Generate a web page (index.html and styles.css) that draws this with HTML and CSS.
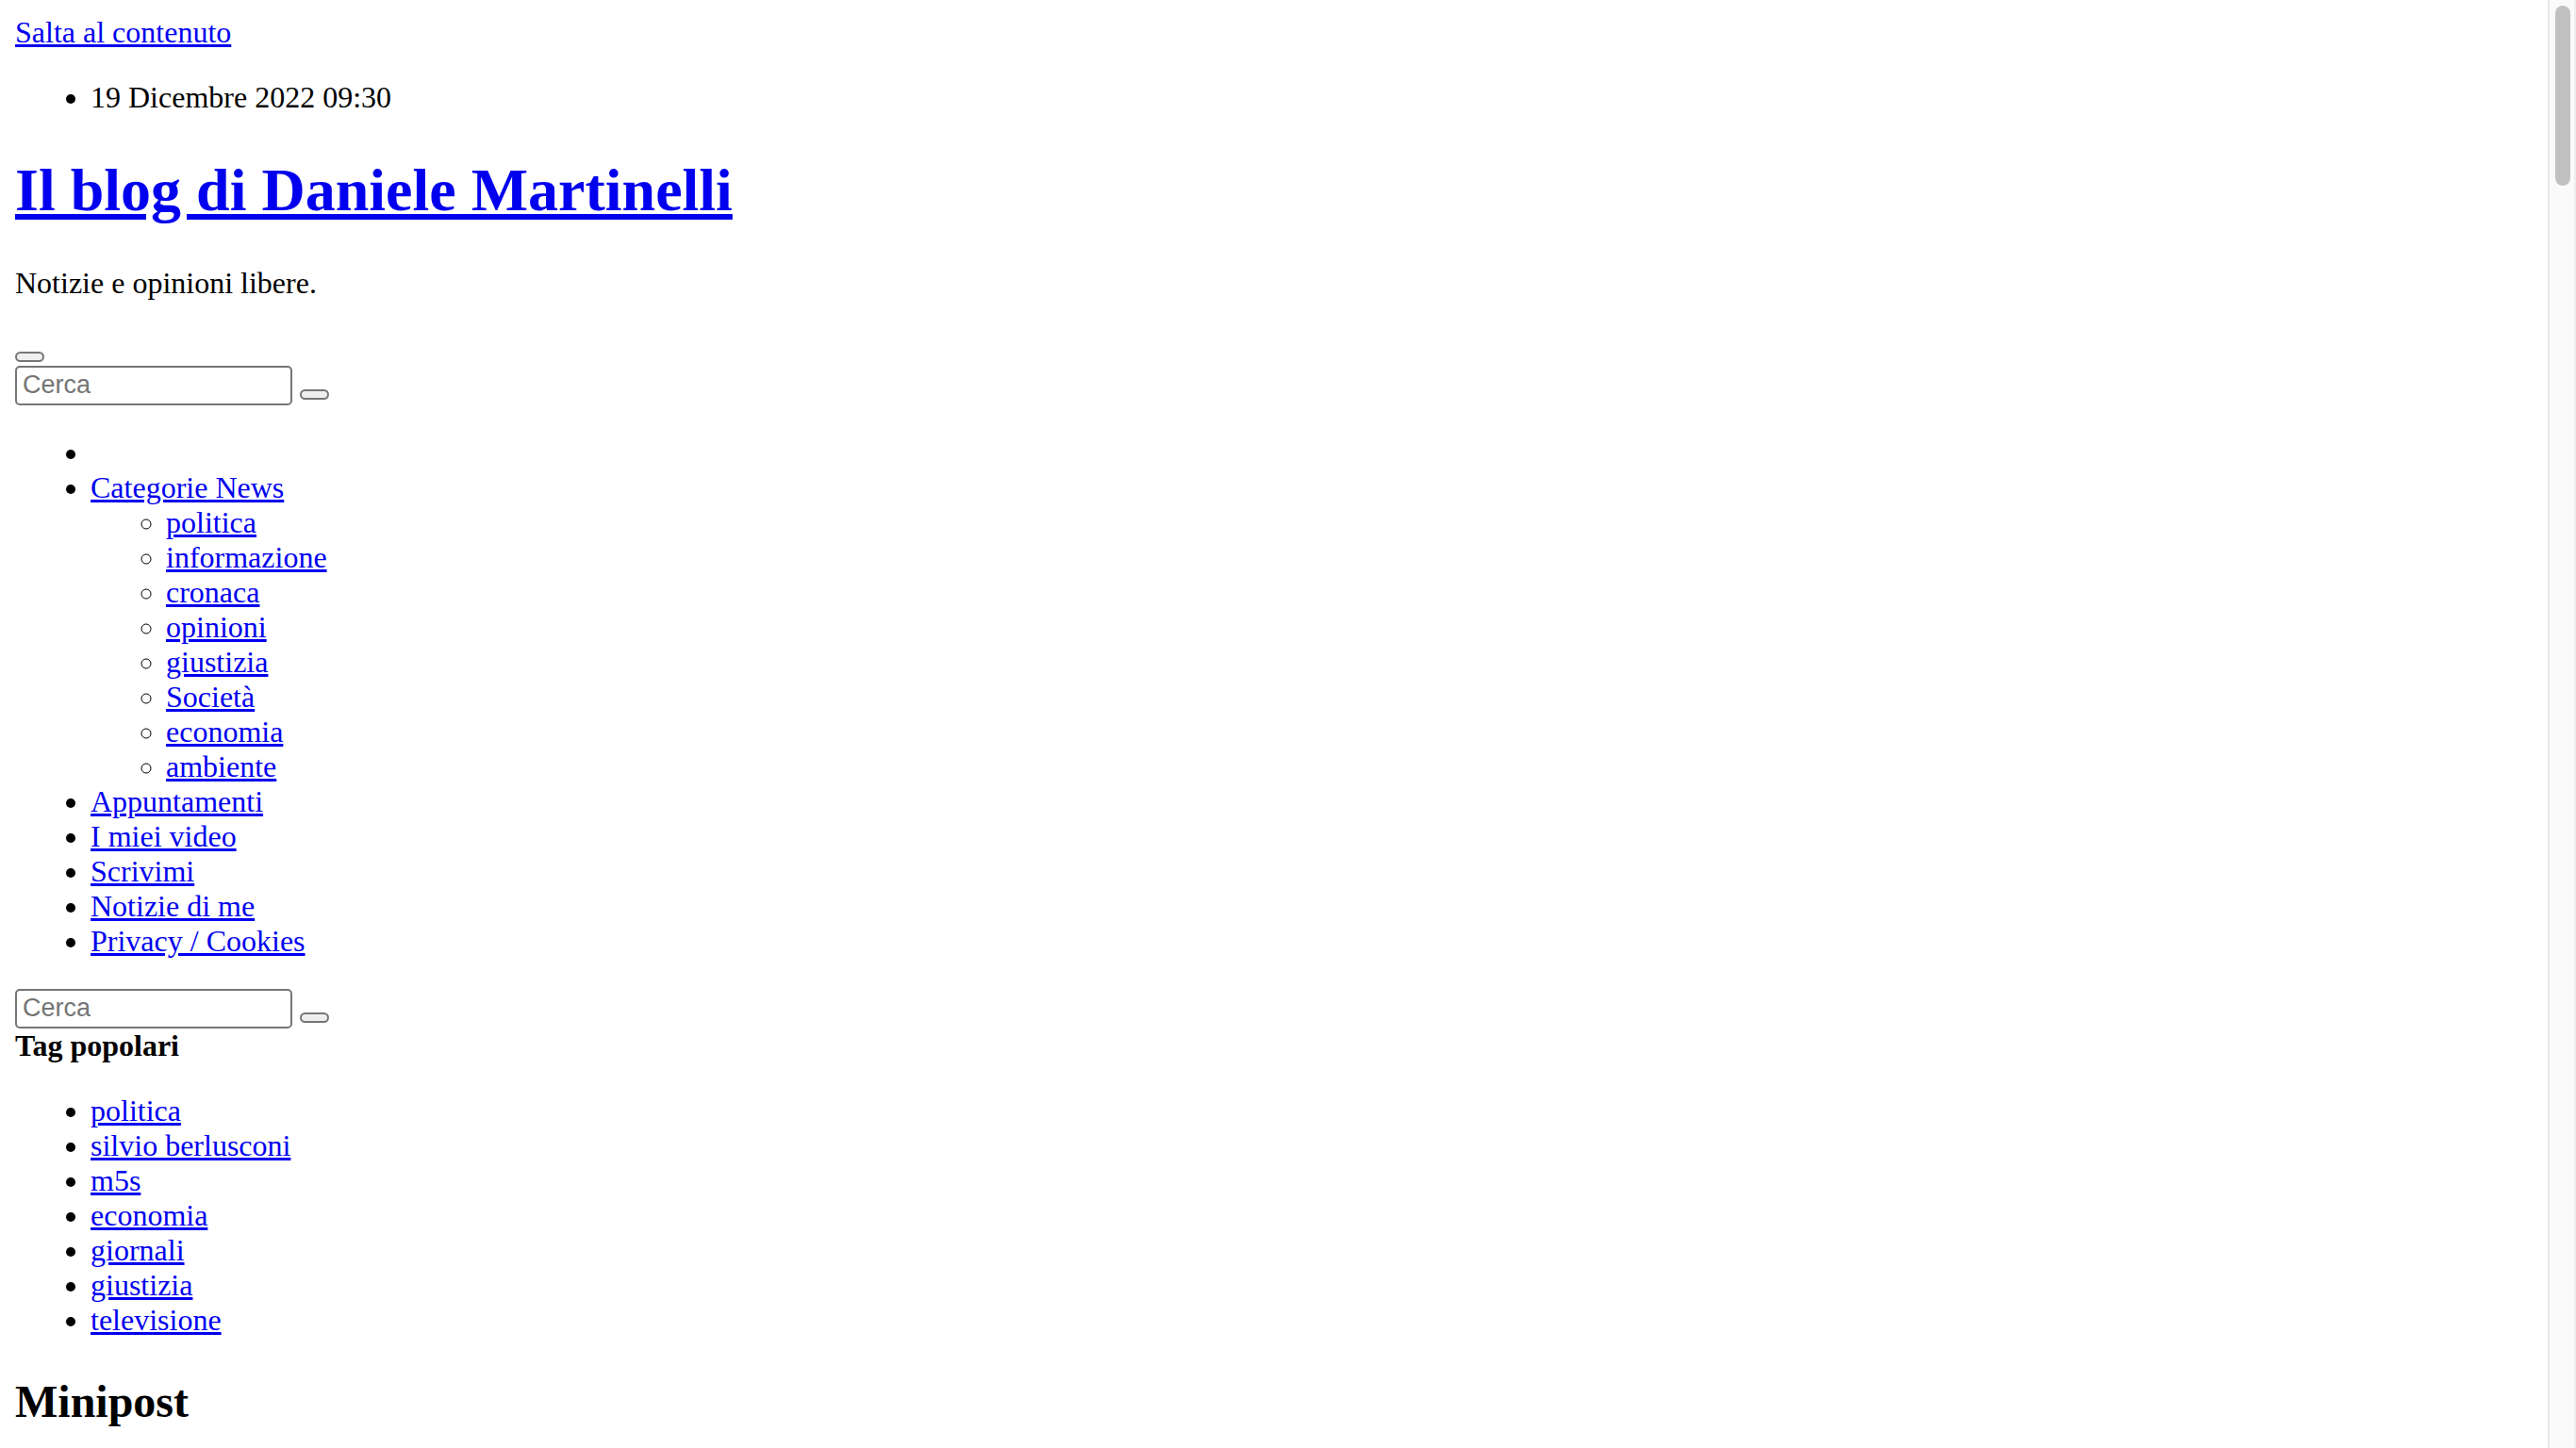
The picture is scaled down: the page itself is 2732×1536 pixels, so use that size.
FILE: index.html
```html
<!DOCTYPE html>
<html lang="it">
<head>
<meta charset="utf-8">
<title>Il blog di Daniele Martinelli</title>
<link rel="stylesheet" href="styles.css">
</head>
<body>
<a class="skip-link" href="#content">Salta al contenuto</a>
<ul class="dateline">
  <li>19 Dicembre 2022 09:30</li>
</ul>
<h1 class="site-title"><a href="#">Il blog di Daniele Martinelli</a></h1>
<p class="tagline">Notizie e opinioni libere.</p>
<div class="header-tools">
  <button class="btn btn-menu" type="button" aria-label="Menu"></button>
  <form class="search"><input class="search-field" type="text" placeholder="Cerca"> <button class="btn btn-search" type="submit" aria-label="Cerca"></button></form>
</div>
<ul class="menu">
  <li></li>
  <li><a href="#">Categorie News</a>
    <ul class="submenu">
      <li><a href="#">politica</a></li>
      <li><a href="#">informazione</a></li>
      <li><a href="#">cronaca</a></li>
      <li><a href="#">opinioni</a></li>
      <li><a href="#">giustizia</a></li>
      <li><a href="#">Società</a></li>
      <li><a href="#">economia</a></li>
      <li><a href="#">ambiente</a></li>
    </ul>
  </li>
  <li><a href="#">Appuntamenti</a></li>
  <li><a href="#">I miei video</a></li>
  <li><a href="#">Scrivimi</a></li>
  <li><a href="#">Notizie di me</a></li>
  <li><a href="#">Privacy / Cookies</a></li>
</ul>
<form class="search"><input class="search-field" type="text" placeholder="Cerca"> <button class="btn btn-search" type="submit" aria-label="Cerca"></button></form>
<div class="widget-title">Tag popolari</div>
<ul class="tags">
  <li><a href="#">politica</a></li>
  <li><a href="#">silvio berlusconi</a></li>
  <li><a href="#">m5s</a></li>
  <li><a href="#">economia</a></li>
  <li><a href="#">giornali</a></li>
  <li><a href="#">giustizia</a></li>
  <li><a href="#">televisione</a></li>
</ul>
<h2 class="section-title" id="content">Minipost</h2>
<aside class="scrollbar" aria-hidden="true"><span class="scrollbar-thumb"></span></aside>
</body>
</html>
```

FILE: styles.css
```css
html {
  background: #ffffff;
}

body {
  margin: 16px;
  font-family: "Liberation Serif", "Times New Roman", serif;
  font-size: 32px;
  line-height: 37px;
  color: #000000;
}

a {
  color: #0000ee;
  text-decoration: underline;
}

ul {
  margin: 32px 0;
  padding-left: 80px;
}

.submenu {
  margin: 0;
  list-style-type: circle;
}

.site-title {
  font-size: 64px;
  line-height: 74px;
  font-weight: bold;
  margin: 42.88px 0;
}

.tagline {
  margin: 32px 0;
}

.search {
  margin: 0;
}

.btn {
  display: inline-block;
  box-sizing: border-box;
  width: 31px;
  height: 11px;
  padding: 0;
  margin: 0;
  border: 2px solid #767676;
  border-radius: 6px;
  background: #efefef;
  vertical-align: baseline;
}

.btn-menu {
  vertical-align: -2px;
}

.btn-search {
  vertical-align: -5px;
}

.search-field {
  box-sizing: border-box;
  width: 294px;
  height: 42px;
  margin: 0;
  padding: 2px 6px;
  border: 2px solid #767676;
  border-radius: 5px;
  font-family: "Liberation Sans", Arial, sans-serif;
  font-size: 27px;
  color: #000000;
  background: #ffffff;
  -webkit-appearance: none;
  appearance: none;
}

.search-field::placeholder {
  color: #757575;
}

.widget-title {
  font-weight: bold;
}

.section-title {
  font-size: 48px;
  line-height: 55px;
  font-weight: bold;
  margin: 39.84px 0;
}

.scrollbar {
  position: fixed;
  top: 0;
  right: 0;
  bottom: 0;
  width: 26px;
  border-left: 2px solid #e8e8e8;
  border-right: 2px solid #ededed;
  background: #fafafa;
}

.scrollbar-thumb {
  display: block;
  margin: 6px 0 0 6px;
  width: 16px;
  height: 191px;
  border-radius: 8px;
  background: #c1c1c1;
}
```
